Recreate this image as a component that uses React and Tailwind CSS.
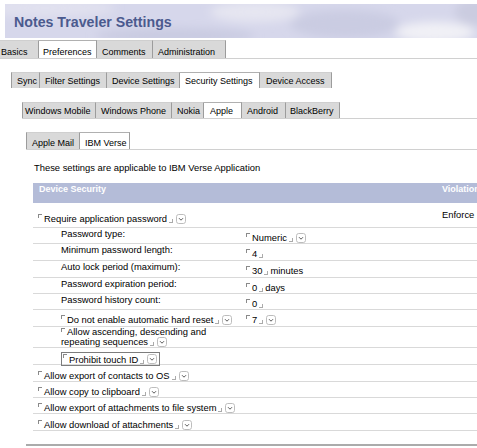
import React from "react";

function Open() {
  return <span className="inline-block w-[4px] h-[4px] border-l border-t border-[#8a8a8a] mr-[2px] self-start mt-[1px] shrink-0" />;
}
function Close() {
  return <span className="inline-block w-[4px] h-[4px] border-r border-b border-[#ababab] ml-[2px] self-end mb-[1px] shrink-0" />;
}
function Drop() {
  return (
    <svg width="10" height="10" viewBox="0 0 10 10" className="ml-[3px] shrink-0">
      <rect x="0.5" y="0.5" width="9" height="9" rx="2.2" fill="#fff" stroke="#bdbdbd" />
      <path d="M3 4.2 L5 6.2 L7 4.2" fill="none" stroke="#5a5a5a" strokeWidth="1" />
    </svg>
  );
}
function Field({ children, drop, after }) {
  return (
    <span className="inline-flex items-center h-[11px]">
      <Open />
      <span>{children}</span>
      <Close />
      {drop && <Drop />}
      {after && <span className="ml-[2px]">{after}</span>}
    </span>
  );
}

function Tab({ label, active, w, first, h, pt, pl }) {
  return (
    <div
      className={
        "shrink-0 text-[9px] border-t border-r border-[#9c9c9c] " +
        (first ? "border-l " : "") +
        (active ? "bg-white border-t-[#b0b0b0] " : "bg-[#d9d9d9] border-t-[#cfcfcf] ")
      }
      style={{ width: w, height: h, paddingTop: pt, paddingLeft: pl }}
    >
      <span className="block leading-[11px] whitespace-nowrap">{label}</span>
    </div>
  );
}

function HeaderArt() {
  return (
    <svg className="absolute inset-0" width="472" height="34" viewBox="0 0 472 34" preserveAspectRatio="none">
      <defs>
        <filter id="b" x="-20%" y="-50%" width="140%" height="200%">
          <feGaussianBlur stdDeviation="5" />
        </filter>
      </defs>
      <rect width="472" height="34" fill="#d6d7eb" />
      <g filter="url(#b)">
        <ellipse cx="40" cy="4" rx="70" ry="9" fill="#e1e1ef" />
        <ellipse cx="170" cy="32" rx="80" ry="8" fill="#c9cbe1" />
        <ellipse cx="250" cy="8" rx="45" ry="10" fill="#e6e6f1" />
        <ellipse cx="340" cy="20" rx="55" ry="14" fill="#cacce2" />
        <ellipse cx="430" cy="28" rx="40" ry="10" fill="#f1f1f6" />
        <ellipse cx="470" cy="8" rx="20" ry="14" fill="#cbcce0" />
      </g>
    </svg>
  );
}

function Row({ h, pt, label, value, enforce, indent }) {
  return (
    <div
      className="grid grid-cols-[213px_196px_1fr] border-b border-[#d9d9d9] box-content"
      style={{ height: h, paddingTop: pt }}
    >
      <div className={indent ? "pl-[28px] leading-[11px]" : "pl-[5px] leading-[11px]"}>{label}</div>
      <div className="leading-[11px]">{value}</div>
      <div className="leading-[11px]">{enforce}</div>
    </div>
  );
}

export default function App() {
  return (
    <div className="w-[477px] h-[448px] overflow-hidden bg-white text-black font-['Liberation_Sans',Arial,sans-serif] text-[9.4px] pt-[4px]">
      {/* header */}
      <div className="ml-[5px] h-[34px] relative overflow-hidden">
        <HeaderArt />
        <div className="relative pl-[9px] pt-[10px] text-[14.2px] leading-[16px] font-bold text-[#4b5a8e] whitespace-nowrap">
          Notes Traveler Settings
        </div>
      </div>

      {/* tabs row 1 */}
      <div className="mt-[2px] flex border-b border-[#d0d0d0]">
        <Tab label="Basics" w={39} h={18} pt={6} pl={1} />
        <Tab label="Preferences" w={58} h={18} pt={6} pl={4} active />
        <Tab label="Comments" w={56} h={18} pt={6} pl={5} />
        <Tab label="Administration" w={73} h={18} pt={6} pl={5} />
      </div>

      {/* tabs row 2 */}
      <div className="mt-[13px] ml-[11px] flex">
        <Tab label="Sync" w={29} h={16} pt={3} pl={5} first />
        <Tab label="Filter Settings" w={67} h={16} pt={3} pl={5} />
        <Tab label="Device Settings" w={73} h={16} pt={3} pl={5} />
        <Tab label="Security Settings" w={80} h={16} pt={3} pl={5} active />
        <Tab label="Device Access" w={72} h={16} pt={3} pl={6} />
      </div>

      {/* tabs row 3 */}
      <div className="mt-[14px] ml-[22px] flex border-b border-[#d0d0d0]">
        <Tab label="Windows Mobile" w={74} h={16} pt={3} pl={2} first />
        <Tab label="Windows Phone" w={76} h={16} pt={3} pl={5} />
        <Tab label="Nokia" w={32} h={16} pt={3} pl={5} />
        <Tab label="Apple" w={38} h={16} pt={3} pl={6} active />
        <Tab label="Android" w={44} h={16} pt={3} pl={5} />
        <Tab label="BlackBerry" w={54} h={16} pt={3} pl={4} />
      </div>

      {/* tabs row 4 */}
      <div className="mt-[13px] ml-[26px] flex border-b border-[#d0d0d0]">
        <Tab label="Apple Mail" w={54} h={17} pt={5} pl={5} first />
        <Tab label="IBM Verse" w={50} h={17} pt={5} pl={5} active />
      </div>

      <div className="mt-[12px] ml-[34px] leading-[11px] whitespace-nowrap">
        These settings are applicable to IBM Verse Application
      </div>

      {/* table */}
      <div className="mt-[10px] ml-[33px] w-[470px] whitespace-nowrap">
        <div className="h-[20px] bg-[#b4bcd8] text-white text-[9px] font-bold flex pt-[1px] leading-[11px]">
          <span className="w-[409px] pl-[6px]">Device Security</span>
          <span>Violation</span>
        </div>

        <Row h={18} pt={6} label={<Field drop>Require application password</Field>} enforce="Enforce" />
        <Row h={15} pt={0} indent label="Password type:" value={<Field drop>Numeric</Field>} />
        <Row h={16} pt={0} indent label="Minimum password length:" value={<Field>4</Field>} />
        <Row h={16} pt={0} indent label="Auto lock period (maximum):" value={<Field after="minutes">30</Field>} />
        <Row h={15} pt={0} indent label="Password expiration period:" value={<Field after="days">0</Field>} />
        <Row h={15} pt={0} indent label="Password history count:" value={<Field>0</Field>} />
        <Row h={16} pt={0} indent label={<Field drop>Do not enable automatic hard reset</Field>} value={<Field drop>7</Field>} />

        <div className="border-b border-[#d9d9d9] h-[20px] box-content">
          <div className="pl-[28px] leading-[10px]">
            <div className="flex items-start h-[10px]">
              <Open />
              <span>Allow ascending, descending and</span>
            </div>
            <div className="flex items-center h-[10px]">
              <span>repeating sequences</span>
              <Close />
              <Drop />
            </div>
          </div>
        </div>

        <div className="border-b border-[#d9d9d9] h-[16px] box-content">
          <div className="pl-[28px]">
            <span className="inline-flex items-center h-[14px] border border-[#7d7d7d] pl-[1px] pr-[2px] leading-[11px]">
              <Open />
              <span>Prohibit touch ID</span>
              <Close />
              <Drop />
            </span>
          </div>
        </div>

        <Row h={15} pt={1} label={<Field drop>Allow export of contacts to OS</Field>} />
        <Row h={15} pt={0} label={<Field drop>Allow copy to clipboard</Field>} />
        <Row h={15} pt={0} label={<Field drop>Allow export of attachments to file system</Field>} />
        <Row h={15} pt={1} label={<Field drop>Allow download of attachments</Field>} />
      </div>

      <div className="mt-[13px] ml-[26px] border-t-2 border-[#ababab]" />
    </div>
  );
}
